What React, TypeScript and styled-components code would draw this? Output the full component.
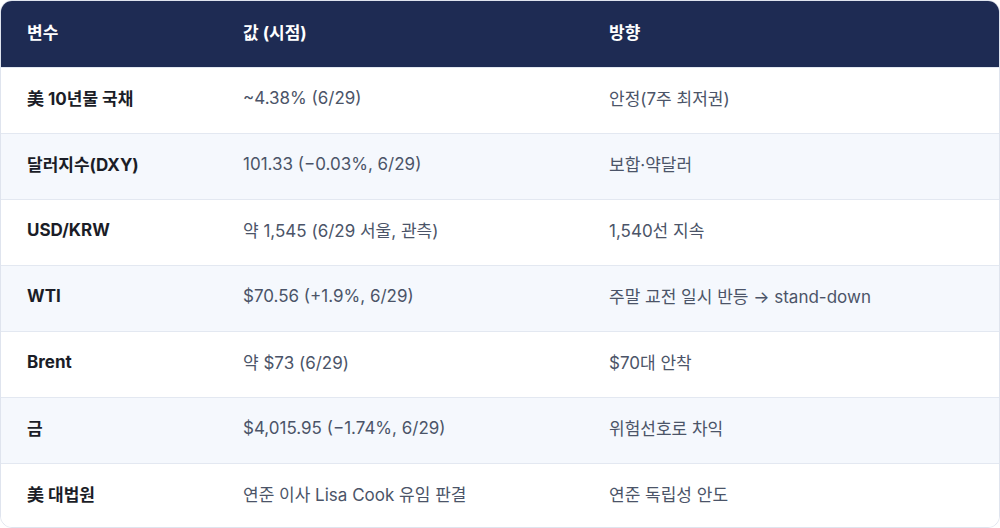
import React from 'react';
import styled, { createGlobalStyle } from 'styled-components';

const Global = createGlobalStyle`
  html, body {
    margin: 0;
    padding: 0;
    background: #ffffff;
  }
  body {
    font-family: Inter, "Noto Sans CJK KR", sans-serif;
    -webkit-font-smoothing: antialiased;
  }
`;

const Table = styled.div`
  width: 1000px;
  height: 528px;
  box-sizing: border-box;
  border: 1px solid #dfe4ee;
  border-radius: 12px;
  overflow: hidden;
  display: grid;
  grid-template-columns: 216px 366px 1fr;
  grid-auto-rows: 66px;
`;

const HeadCell = styled.div`
  display: flex;
  align-items: center;
  padding: 0 0 6px 26px;
  background: #1e2b53;
  color: #ffffff;
  font-size: 17px;
  font-weight: 700;
`;

const Cell = styled.div<{ $alt: boolean; $strong?: boolean }>`
  display: flex;
  align-items: center;
  padding: 0 0 6px 26px;
  background: ${(p) => (p.$alt ? '#f5f8fd' : '#ffffff')};
  border-top: 1px solid #e3e8f1;
  font-size: 17px;
  font-weight: ${(p) => (p.$strong ? 700 : 400)};
  color: ${(p) => (p.$strong ? '#1b1d27' : '#4b5468')};
  white-space: nowrap;
`;

const rows: [string, string, string][] = [
  ['美 10년물 국채', '~4.38% (6/29)', '안정(7주 최저권)'],
  ['달러지수(DXY)', '101.33 (−0.03%, 6/29)', '보합·약달러'],
  ['USD/KRW', '약 1,545 (6/29 서울, 관측)', '1,540선 지속'],
  ['WTI', '$70.56 (+1.9%, 6/29)', '주말 교전 일시 반등 → stand-down'],
  ['Brent', '약 $73 (6/29)', '$70대 안착'],
  ['금', '$4,015.95 (−1.74%, 6/29)', '위험선호로 차익'],
  ['美 대법원', '연준 이사 Lisa Cook 유임 판결', '연준 독립성 안도'],
];

const App: React.FC = () => {
  return (
    <>
      <Global />
      <Table>
        <HeadCell>변수</HeadCell>
        <HeadCell>값 (시점)</HeadCell>
        <HeadCell>방향</HeadCell>
        {rows.map(([name, value, dir], i) => (
          <React.Fragment key={name}>
            <Cell $alt={i % 2 === 1} $strong>{name}</Cell>
            <Cell $alt={i % 2 === 1}>{value}</Cell>
            <Cell $alt={i % 2 === 1}>{dir}</Cell>
          </React.Fragment>
        ))}
      </Table>
    </>
  );
};

export default App;
